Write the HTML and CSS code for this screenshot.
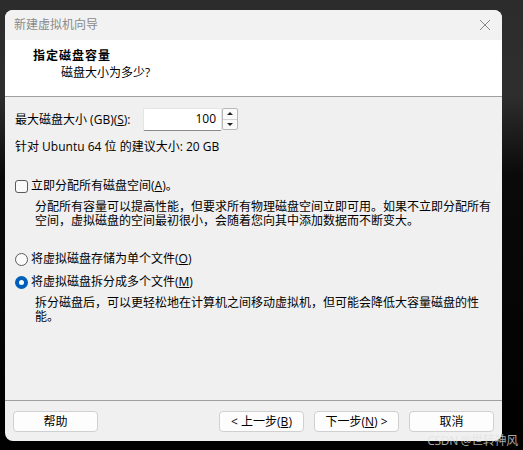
FILE: index.html
```html
<!DOCTYPE html>
<html lang="zh-CN">
<head>
    <meta charset="UTF-8" />
    <title>新建虚拟机向导</title>
    <link rel="stylesheet" href="styles.css">
</head>
<body>
    <div class="window">
        <div class="titlebar">
            <span class="title">新建虚拟机向导</span>
            <span class="close" title="关闭">
                <svg width="12" height="12" viewBox="0 0 12 12"><path d="M1 1 L11 11 M11 1 L1 11" stroke="#8a8a8a" stroke-width="1" fill="none"/></svg>
            </span>
        </div>

        <div class="header">
            <div class="heading">指定磁盘容量</div>
            <div class="subheading">磁盘大小为多少?</div>
        </div>

        <div class="content">
            <div class="size-row">
                <label class="size-label" for="disk-size">最大磁盘大小 (GB)(<u>S</u>):</label>
                <div class="spin">
                    <input type="text" id="disk-size" value="100" />
                    <div class="spin-buttons">
                        <span class="spin-up"></span>
                        <span class="spin-down"></span>
                    </div>
                </div>
            </div>
            <div class="recommend">针对 Ubuntu 64 位 的建议大小: 20 GB</div>

            <div class="option check-row">
                <span class="checkbox"></span>
                <span>立即分配所有磁盘空间(<u>A</u>)。</span>
            </div>
            <p class="desc">分配所有容量可以提高性能，但要求所有物理磁盘空间立即可用。如果不立即分配所有<br>空间，虚拟磁盘的空间最初很小，会随着您向其中添加数据而不断变大。</p>

            <div class="option radio-row first">
                <span class="radio"></span>
                <span>将虚拟磁盘存储为单个文件(<u>O</u>)</span>
            </div>
            <div class="option radio-row">
                <span class="radio checked"></span>
                <span>将虚拟磁盘拆分成多个文件(<u>M</u>)</span>
            </div>
            <p class="desc">拆分磁盘后，可以更轻松地在计算机之间移动虚拟机，但可能会降低大容量磁盘的性<br>能。</p>
        </div>

        <div class="footer">
            <button class="btn">帮助</button>
            <div class="nav-buttons">
                <button class="btn">&lt; 上一步(<u>B</u>)</button>
                <button class="btn">下一步(<u>N</u>) &gt;</button>
                <button class="btn">取消</button>
            </div>
        </div>
    </div>

    <div class="watermark">CSDN @世转神风</div>
</body>
</html>
```

FILE: styles.css
```css
* {
    box-sizing: border-box;
}
body {
    margin: 0;
    width: 523px;
    height: 450px;
    overflow: hidden;
    position: relative;
    font-family: "Open Sans", "Noto Sans CJK SC", sans-serif;
    font-size: 12px;
    color: #000;
    background: linear-gradient(to bottom, #2c2c2c 0, #2e2e2e 95px, #0a0a0a 175px, #000 100%);
    padding: 10px 0 0 5px;
}
.window {
    width: 497px;
    height: 431px;
    background-color: #f0f0f0;
    border-radius: 8px;
    overflow: hidden;
    display: flex;
    flex-direction: column;
}

/* barra de titulo */
.titlebar {
    height: 30px;
    flex: none;
    display: flex;
    align-items: center;
    justify-content: space-between;
    padding: 0 9px 0 9px;
    background-color: #f2f2f2;
}
.title {
    color: #8a8a8a;
    font-size: 12px;
    line-height: 14px;
}
.close {
    display: flex;
    width: 12px;
    height: 12px;
    margin-right: 2px;
}

/* cabecera blanca */
.header {
    height: 57px;
    flex: none;
    background-color: #fff;
    border-bottom: 1px solid #a0a0a0;
    padding: 9px 0 0 28px;
}
.heading {
    font-weight: 700;
    line-height: 14px;
    letter-spacing: 1px;
}
.subheading {
    margin: 3px 0 0 28px;
    line-height: 14px;
}

/* contenido */
.content {
    flex: 1;
    padding: 11px 10px 0 10px;
    border-bottom: 1px solid #a0a0a0;
}
.size-row {
    display: flex;
    align-items: center;
    height: 23px;
}
.size-label {
    width: 128px;
    line-height: 14px;
}
u {
    text-decoration-thickness: 1px;
    text-underline-offset: 1px;
}
.spin {
    display: flex;
    align-items: stretch;
    height: 23px;
}
.spin input {
    width: 79px;
    height: 23px;
    border: 1px solid #e4e4e4;
    border-bottom-color: #8a8a8a;
    border-radius: 2px;
    background-color: #fff;
    text-align: right;
    font-family: inherit;
    font-size: 12px;
    padding: 0 5px 2px 0;
    color: #000;
    outline: none;
}
.spin-buttons {
    width: 16px;
    margin: 0 0 1px 0;
    border: 1px solid #b8b8b8;
    border-radius: 2px;
    background-color: #fafafa;
    display: flex;
    flex-direction: column;
}
.spin-up, .spin-down {
    flex: 1;
    display: flex;
    align-items: center;
    justify-content: center;
}
.spin-up {
    border-bottom: 1px solid #d4d4d4;
}
.spin-up::before {
    content: "";
    border-left: 3px solid transparent;
    border-right: 3px solid transparent;
    border-bottom: 3px solid #202020;
}
.spin-down::before {
    content: "";
    border-left: 3px solid transparent;
    border-right: 3px solid transparent;
    border-top: 3px solid #202020;
}
.recommend {
    margin-top: 9px;
    line-height: 14px;
}

.option {
    display: flex;
    align-items: center;
    gap: 3px;
    line-height: 14px;
}
.check-row {
    margin-top: 25px;
}
.checkbox {
    width: 13px;
    height: 13px;
    border: 1px solid #5a5a5a;
    border-radius: 3px;
    background-color: #fafafa;
}
.desc {
    margin: 7px 0 0 20px;
    line-height: 14px;
}
.radio-row.first {
    margin-top: 24px;
}
.radio-row + .radio-row {
    margin-top: 9px;
}
.radio {
    width: 13px;
    height: 13px;
    border: 1px solid #5a5a5a;
    border-radius: 50%;
    background-color: #fafafa;
}
.radio.checked {
    border: 4px solid #005fb8;
    background-color: #fff;
}

/* pie con botones */
.footer {
    height: 40px;
    flex: none;
    display: flex;
    justify-content: space-between;
    padding: 10px 8px 0 8px;
}
.nav-buttons {
    display: flex;
    gap: 10px;
}
.btn {
    width: 85px;
    height: 21px;
    background-color: #fdfdfd;
    border: 1px solid #d0d0d0;
    border-radius: 4px;
    font-family: inherit;
    font-size: 12px;
    color: #000;
    padding: 0;
    line-height: 14px;
}

.watermark {
    position: absolute;
    right: 5px;
    bottom: 1px;
    font-size: 12px;
    color: rgba(225, 225, 225, 0.75);
    letter-spacing: -0.3px;
}
```
